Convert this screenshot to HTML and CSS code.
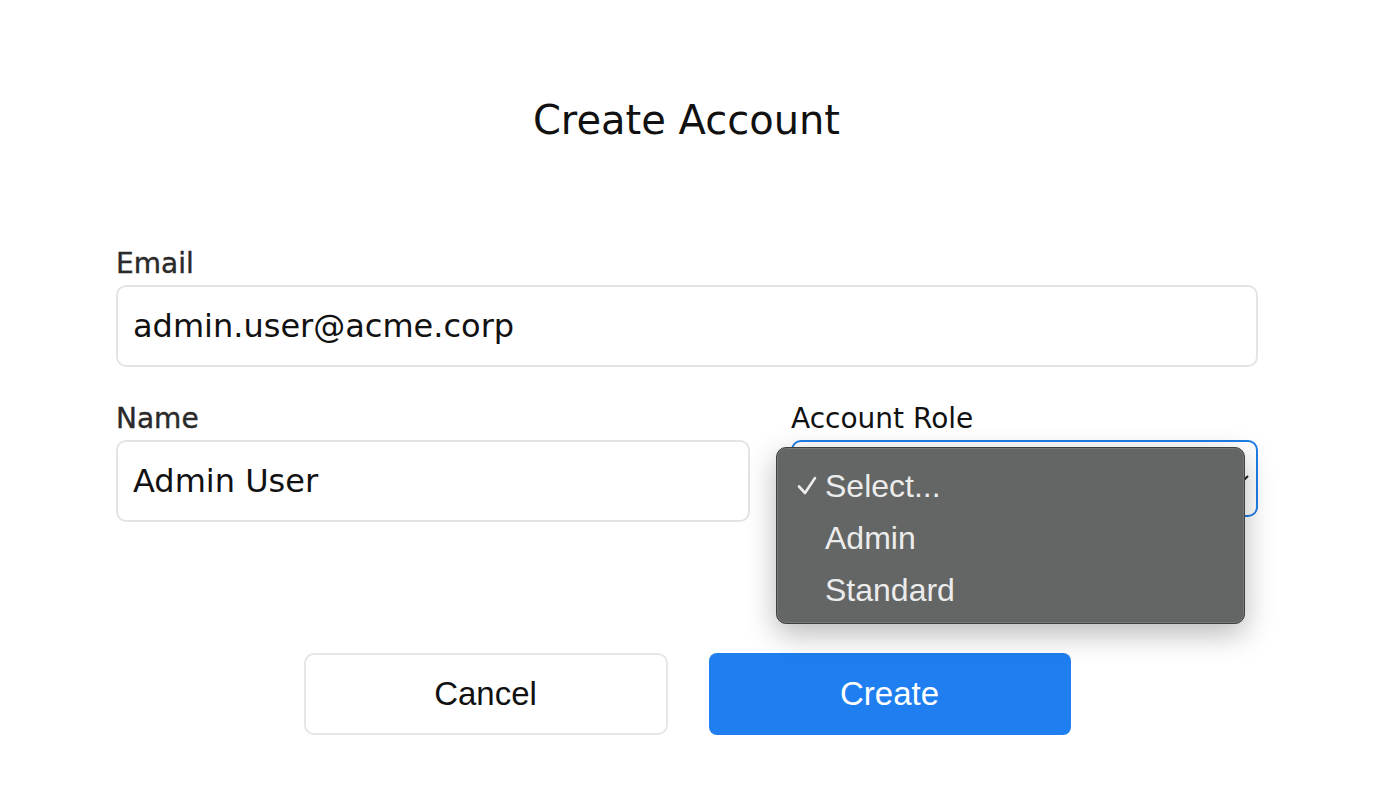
FILE: index.html
```html
<!DOCTYPE html>
<html lang="en">
<head>
<meta charset="utf-8">
<title>Create Account</title>
<link rel="stylesheet" href="styles.css">
</head>
<body>
<main class="page">
  <h1 class="title">Create Account</h1>
  <form class="form">
    <div class="field">
      <label class="label label-muted">Email</label>
      <div class="input">admin.user@acme.corp</div>
    </div>
    <div class="row">
      <div class="field">
        <label class="label label-muted">Name</label>
        <div class="input">Admin User</div>
      </div>
      <div class="field">
        <label class="label">Account Role</label>
        <div class="select-wrap">
          <div class="select">
            <svg class="chevron" width="14" height="10" viewBox="0 0 14 10"><path d="M2 2 L7 7 L12 2" fill="none" stroke="#222" stroke-width="2"/></svg>
          </div>
          <div class="menu">
            <div class="option">
              <svg class="check" width="20" height="20" viewBox="0 0 20 20"><path d="M2 10.5 L8 17 L18 2" fill="none" stroke="#ededed" stroke-width="2.6" stroke-linecap="round" stroke-linejoin="round"/></svg>Select...</div>
            <div class="option">Admin</div>
            <div class="option">Standard</div>
          </div>
        </div>
      </div>
    </div>
    <div class="actions">
      <button type="button" class="btn btn-cancel">Cancel</button>
      <button type="button" class="btn btn-create">Create</button>
    </div>
  </form>
</main>
</body>
</html>
```

FILE: styles.css
```css
* { box-sizing: border-box; }
html, body { margin: 0; padding: 0; background: #ffffff; }
body { font-family: "DejaVu Sans", sans-serif; color: #111; }

.page {
  padding-top: 96px;
}

.title {
  margin: 0;
  text-align: center;
  font-size: 40px;
  line-height: 48px;
  font-weight: normal;
  color: #111;
  padding-right: 9px;
}

.form {
  margin: 103px 0 0 116px;
  width: 1142px;
  display: flex;
  flex-direction: column;
}

.field {
  display: flex;
  flex-direction: column;
}

.label {
  font-size: 28px;
  line-height: 34px;
  color: #111;
  margin-bottom: 4px;
}
.label-muted {
  color: #2a2a2a;
  -webkit-text-stroke: 0.4px #2a2a2a;
}

.input {
  height: 82px;
  border: 2px solid #e4e4e4;
  border-radius: 10px;
  padding: 0 15px;
  font-size: 32px;
  line-height: 78px;
  color: #111;
  background: #fff;
}

.row {
  margin-top: 35px;
  display: grid;
  grid-template-columns: 634px 1fr;
  column-gap: 41px;
}

.select-wrap {
  position: relative;
}

.select {
  height: 77px;
  border: 2px solid #1f7de6;
  border-radius: 10px;
  background: #fff;
  display: flex;
  align-items: center;
  justify-content: flex-end;
  padding-right: 6px;
}

.chevron { display: block; }

.menu {
  position: absolute;
  left: -15px;
  top: 7px;
  width: 469px;
  height: 177px;
  background: #646665;
  border: 1px solid #3f4040;
  border-radius: 10px;
  box-shadow: inset 0 0 0 1px rgba(255,255,255,0.12), 0 10px 30px rgba(0,0,0,0.28);
  padding-top: 16px;
  font-family: "Liberation Sans", Arial, sans-serif;
}

.option {
  position: relative;
  height: 52px;
  line-height: 44px;
  padding-left: 48px;
  font-size: 32px;
  color: #ececec;
}

.check {
  position: absolute;
  left: 20px;
  top: 12px;
}

.actions {
  margin-top: 131px;
  display: flex;
  justify-content: center;
  gap: 41px;
}

.btn {
  height: 82px;
  font-family: "Liberation Sans", Arial, sans-serif;
  font-size: 33px;
  border-radius: 10px;
  cursor: pointer;
}

.btn-cancel {
  width: 364px;
  background: #fff;
  color: #111;
  border: 2px solid #e6e6e6;
}

.btn-create {
  width: 362px;
  background: #1f7ff0;
  color: #fff;
  border: none;
  border-radius: 8px;
}
```
